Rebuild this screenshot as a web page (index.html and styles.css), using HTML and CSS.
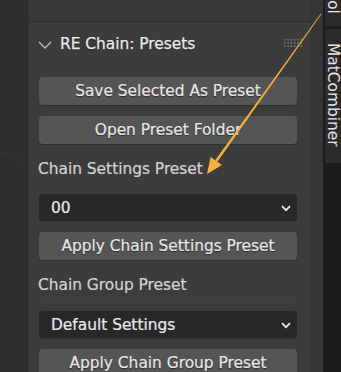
FILE: index.html
```html
<!DOCTYPE html>
<html>
<head>
<meta charset="utf-8">
<link rel="stylesheet" href="styles.css">
</head>
<body>
<div class="app">
  <div class="viewport"></div>
  <div class="region">
    <div class="prev-panel"></div>
    <div class="panel">
      <div class="panel-header">
        <svg class="collapse" width="14" height="8" viewBox="0 0 14 8"><path d="M1 1 L7 7 L13 1" fill="none" stroke="#b9b9b9" stroke-width="1.4"/></svg>
        <span class="panel-title">RE Chain: Presets</span>
        <svg class="grip" width="18" height="8" viewBox="0 0 18 8">
          <g fill="#7a7a7a">
            <rect x="0" y="0" width="1.5" height="1.5"/><rect x="3.3" y="0" width="1.5" height="1.5"/><rect x="6.6" y="0" width="1.5" height="1.5"/><rect x="9.9" y="0" width="1.5" height="1.5"/><rect x="13.2" y="0" width="1.5" height="1.5"/><rect x="16.5" y="0" width="1.5" height="1.5"/>
            <rect x="0" y="3.2" width="1.5" height="1.5"/><rect x="3.3" y="3.2" width="1.5" height="1.5"/><rect x="6.6" y="3.2" width="1.5" height="1.5"/><rect x="9.9" y="3.2" width="1.5" height="1.5"/><rect x="13.2" y="3.2" width="1.5" height="1.5"/><rect x="16.5" y="3.2" width="1.5" height="1.5"/>
            <rect x="0" y="6.4" width="1.5" height="1.5"/><rect x="3.3" y="6.4" width="1.5" height="1.5"/><rect x="6.6" y="6.4" width="1.5" height="1.5"/><rect x="9.9" y="6.4" width="1.5" height="1.5"/><rect x="13.2" y="6.4" width="1.5" height="1.5"/><rect x="16.5" y="6.4" width="1.5" height="1.5"/>
          </g>
        </svg>
      </div>
      <div class="panel-body">
        <div class="btn">Save Selected As Preset</div>
        <div class="btn">Open Preset Folder</div>
        <div class="label">Chain Settings Preset</div>
        <div class="select"><span>00</span><svg width="10" height="7" viewBox="0 0 10 7"><path d="M1 1.2 L5 5.2 L9 1.2" fill="none" stroke="#e8e8e8" stroke-width="1.8"/></svg></div>
        <div class="btn">Apply Chain Settings Preset</div>
        <div class="label label-sep">Chain Group Preset</div>
        <div class="select"><span>Default Settings</span><svg width="10" height="7" viewBox="0 0 10 7"><path d="M1 1.2 L5 5.2 L9 1.2" fill="none" stroke="#e8e8e8" stroke-width="1.8"/></svg></div>
        <div class="btn">Apply Chain Group Preset</div>
      </div>
    </div>
  </div>
  <div class="gutter"></div>
  <div class="tabs">
    <div class="tab tab-tool"><span>Tool</span></div>
    <div class="tab tab-mat"><span>MatCombiner</span></div>
  </div>
</div>
<svg class="annotation" width="341" height="372" viewBox="0 0 341 372">
  <line x1="0" y1="152" x2="26" y2="163" stroke="#383838" stroke-width="1"/>
  <polygon points="321.3,14.2 320.7,13.8 215.2,160.2 217.4,161.8" fill="#f3b33a"/>
  <polygon points="207,174 210.6,156.9 222,165.1" fill="#f3b33a"/>
</svg>
</body>
</html>
```
FILE: styles.css
```css
html, body {
  margin: 0;
  padding: 0;
  background: #2e2e2e;
}
body {
  width: 341px;
  height: 372px;
  overflow: hidden;
  position: relative;
  font-family: "DejaVu Sans", sans-serif;
  font-size: 15.4px;
}
.app {
  display: flex;
  width: 341px;
  height: 372px;
}
.viewport {
  width: 28px;
  flex: none;
  background: #2e2e2e;
}
.region {
  width: 282px;
  flex: none;
  background: #3a3a3a;
  border-left: 1px solid #333333;
  box-sizing: border-box;
  display: flex;
  flex-direction: column;
}
.prev-panel {
  height: 21px;
  flex: none;
  background: #3a3a3a;
  border-bottom: 1px solid #2c2c2c;
}
.panel {
  background: #3c3c3c;
  padding: 0 13px 0 10px;
  flex: 1;
}
.panel-header {
  height: 44px;
  display: flex;
  align-items: center;
  margin-right: -5px;
}
.collapse {
  margin-left: -1px;
  margin-top: 1px;
  flex: none;
}
.panel-title {
  margin-left: 8px;
  color: #ececec;
  text-shadow: 0 1px 1px #1e1e1e;
  -webkit-text-stroke: 0.25px #ececec;
  flex: 1;
}
.grip {
  flex: none;
  margin-top: -2px;
}
.panel-body {
  display: flex;
  flex-direction: column;
  gap: 11px;
  padding-top: 11px;
}
.btn {
  height: 28px;
  line-height: 28px;
  background: #555555;
  border-radius: 4px;
  text-align: center;
  color: #e8e8e8;
  text-shadow: 0 1px 1px #2a2a2a;
  -webkit-text-stroke: 0.2px #e8e8e8;
  box-shadow: 0 1px 0 #303030;
  white-space: nowrap;
}
.label {
  height: 28px;
  line-height: 28px;
  color: #d4d4d4;
  -webkit-text-stroke: 0.2px #d4d4d4;
  margin-left: -1px;
  white-space: nowrap;
}
.label-sep {
  border-bottom: 1px solid #404040;
}
.select {
  height: 27px;
  background: #282828;
  border-radius: 4px;
  display: flex;
  align-items: center;
  justify-content: space-between;
  padding: 0 6px 0 12px;
  color: #eaeaea;
  -webkit-text-stroke: 0.2px #eaeaea;
  box-shadow: 0 1px 0 #333333;
}
.select svg {
  flex: none;
  margin-top: 1px;
}
.gutter {
  width: 13px;
  flex: none;
  background: #363636;
}
.tabs {
  width: 18px;
  flex: none;
  background: #1b1b1b;
  display: flex;
  flex-direction: column;
  gap: 3px;
  padding-left: 2px;
  box-sizing: border-box;
}
.tab {
  background: #2b2b2b;
  overflow: hidden;
  display: flex;
  writing-mode: vertical-rl;
  color: #e4e4e4;
  font-size: 15.4px;
  line-height: 16px;
  padding-left: 2px;
}
.tab-tool {
  height: 26px;
  justify-content: flex-end;
  padding-bottom: 12px;
  box-sizing: border-box;
}
.tab-mat {
  height: 134px;
  padding-top: 14px;
  box-sizing: border-box;
}
.tab span {
  white-space: nowrap;
}
.annotation {
  position: absolute;
  top: 0;
  left: 0;
  pointer-events: none;
}
```
